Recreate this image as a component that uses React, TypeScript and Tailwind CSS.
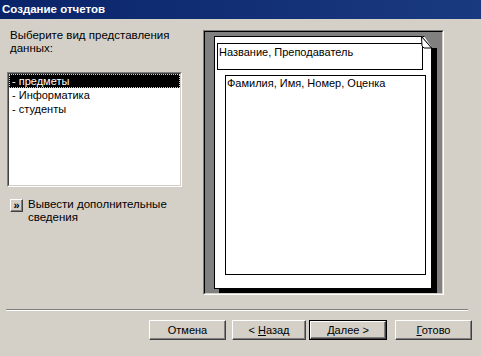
import React from 'react';

const font = { fontFamily: '"Liberation Sans", Arial, sans-serif' };

const raised = 'border border-t-white border-l-white border-r-[#404040] border-b-[#404040] shadow-[inset_-1px_-1px_0_#808080]';

const WizButton: React.FC<{ children: React.ReactNode; def?: boolean; className?: string }> = ({ children, def, className }) => (
    <div className={`${def ? 'border border-black' : ''} ${className || ''}`}>
        <div className={`${raised} bg-[#d4d0c8] h-full flex items-center justify-center text-[11px] text-black`}>
            <span>{children}</span>
        </div>
    </div>
);

const App: React.FC = () => {
    const items = ['- предметы', '- Информатика', '- студенты'];

    return (
        <div className="w-[481px] h-[356px] bg-[#d4d0c8] overflow-hidden text-black" style={font}>
            {/* title bar */}
            <div className="h-[19px] bg-gradient-to-r from-[#0a246a] to-[#1a3a80] flex items-center pl-[2px]">
                <span className="text-white font-bold text-[11.5px] leading-none">Создание отчетов</span>
            </div>

            <div className="flex h-[280px]">
                {/* left column */}
                <div className="w-[175px] ml-[7px] pt-[10px] shrink-0">
                    <div className="pl-[3px] text-[11.5px] leading-[13px]">
                        Выберите вид представления<br />данных:
                    </div>
                    <div className="mt-[17px] h-[115px] bg-white border border-t-[#808080] border-l-[#808080] border-r-white border-b-white">
                        <div className="h-full border border-t-[#404040] border-l-[#404040] border-r-[#d4d0c8] border-b-[#d4d0c8] text-[11px] leading-[14px]">
                            {items.map((it, i) => (
                                <div
                                    key={it}
                                    className={i === 0 ? 'bg-black text-white outline-1 outline-dotted outline-[#d4d0c8] -outline-offset-1 pl-[3px]' : 'pl-[3px]'}
                                >
                                    {it}
                                </div>
                            ))}
                        </div>
                    </div>
                    <div className="mt-[11px] flex items-start gap-[5px] pl-[3px]">
                        <div className={`${raised} w-[13px] h-[13px] mt-[1px] bg-[#d4d0c8] flex items-center justify-center text-[11px] leading-none font-bold`}>
                            »
                        </div>
                        <div className="text-[11.5px] leading-[13px]">
                            Вывести дополнительные<br />сведения
                        </div>
                    </div>
                </div>

                {/* preview */}
                <div className="ml-[21px] mt-[11px] w-[241px] h-[265px] border border-t-[#808080] border-l-[#808080] border-r-white border-b-white shrink-0">
                    <div className="h-full bg-[#808080] border border-t-black border-l-black border-r-[#d4d0c8] border-b-[#d4d0c8] pl-[9px] pt-[4px]">
                        <div className="relative w-[218px] h-[253px] bg-white border border-black shadow-[5px_4px_0_#000]">
                            <div className="ml-[2px] mt-[6px] w-[206px] h-[27px] border border-black text-[11px] leading-[13px] pl-[1px] pt-[2px]">
                                Название, Преподаватель
                            </div>
                            <div className="ml-[10px] mt-[5px] w-[201px] h-[200px] border border-black text-[11px] leading-[13px] pl-[1px] pt-[1px]">
                                Фамилия, Имя, Номер, Оценка
                            </div>
                            <svg className="absolute -top-[1px] -right-[7px]" width="20" height="14" viewBox="0 0 20 14">
                                <polygon points="6,0 20,0 20,14 14,14 14,12" fill="#808080" />
                                <polygon points="4,0 14,12 6,12" fill="#808080" />
                                <polygon points="3.5,0.5 13.5,12 6,12 4,10" fill="#ffffff" stroke="#000" strokeWidth="1" />
                                <rect x="13" y="12" width="6" height="2" fill="#000" />
                            </svg>
                        </div>
                    </div>
                </div>
            </div>

            {/* separator */}
            <div className="ml-[6px] mt-[10px] w-[462px] border-t border-t-[#808080] border-b border-b-white" />

            {/* buttons */}
            <div className="flex mt-[9px] ml-[149px] h-[20px]">
                <WizButton className="w-[77px]">Отмена</WizButton>
                <WizButton className="w-[74px] ml-[6px]">&lt; <u>Н</u>азад</WizButton>
                <WizButton def className="w-[78px] ml-[3px]"><u>Д</u>алее &gt;</WizButton>
                <WizButton className="w-[77px] ml-[8px]"><u>Г</u>отово</WizButton>
            </div>
        </div>
    );
};

export default App;
